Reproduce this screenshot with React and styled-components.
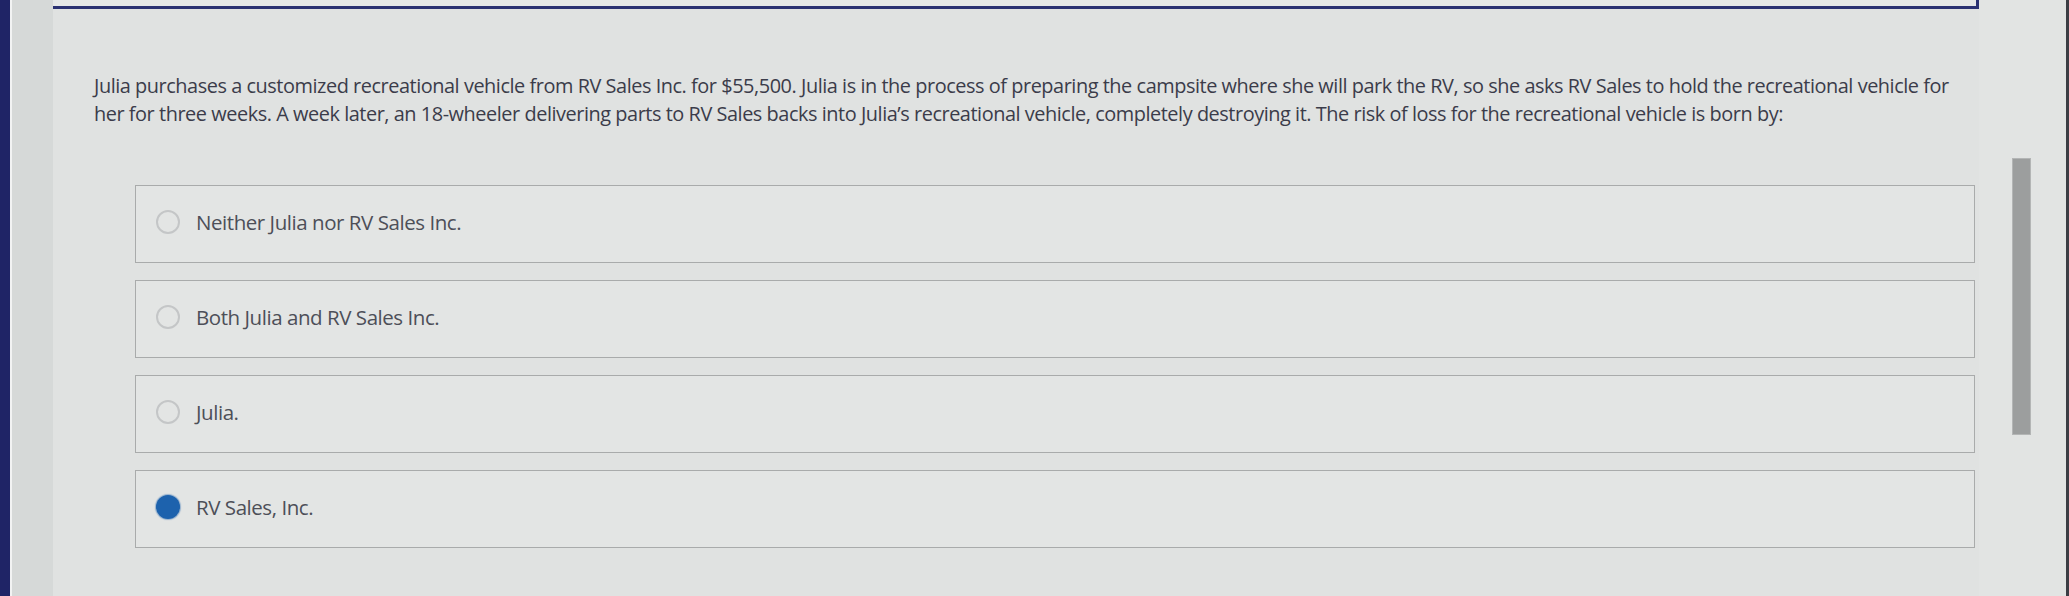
import styled, { createGlobalStyle } from 'styled-components'

const GlobalStyle = createGlobalStyle`
  html, body {
    margin: 0;
    padding: 0;
    background: #dfe1e0;
  }
`

const Screen = styled.div`
  display: flex;
  width: 2069px;
  height: 596px;
  overflow: hidden;
  font-family: 'Open Sans', 'Liberation Sans', sans-serif;
`

const NavRail = styled.div`
  width: 10px;
  background: #1f2466;
  border-right: 2px solid #f2f3f3;
`

const SideBand = styled.div`
  width: 41px;
  background: #d6d9d8;
`

const Main = styled.div`
  flex: 1;
  display: flex;
  background: #e0e2e1;
`

const Content = styled.div`
  width: 1926px;
  display: flex;
  flex-direction: column;
`

const TopPanel = styled.div`
  height: 6px;
  border-bottom: 3px solid #2b3272;
  border-right: 3px solid #2b3272;
  background: #e6e8e7;
`

const Question = styled.p`
  margin: 63px 10px 0 41px;
  font-size: 19.9px;
  line-height: 28px;
  letter-spacing: -0.45px;
  color: #3b3c4a;
`

const Options = styled.div`
  display: flex;
  flex-direction: column;
  gap: 17px;
  margin: 57px 0 0 82px;
  width: 1840px;
`

const Option = styled.label`
  display: flex;
  align-items: center;
  gap: 16px;
  height: 78px;
  box-sizing: border-box;
  padding: 0 0 4px 20px;
  border: 1.5px solid #a9abab;
  background: #e3e5e4;
  font-size: 20.5px;
  letter-spacing: -0.45px;
  color: #4d4f58;
`

const Radio = styled.span`
  width: 24px;
  height: 24px;
  box-sizing: border-box;
  border-radius: 50%;
  flex-shrink: 0;
  border: ${(p) => (p.checked ? 'none' : '2px solid #c4c6c7')};
  background: ${(p) => (p.checked ? '#1d62ad' : 'transparent')};
  box-shadow: ${(p) => (p.checked ? '0 0 1px 1px rgba(29, 98, 173, 0.4)' : 'none')};
`

const ScrollColumn = styled.div`
  flex: 1;
  display: flex;
  background: #e2e4e3;
  border-right: 3px solid #3b3d44;
`

const ScrollThumb = styled.div`
  width: 17px;
  height: 275px;
  margin: 158px 0 0 33px;
  background: #9c9e9e;
  border: 1px solid #b3b5b5;
`

const answers = [
  { text: 'Neither Julia nor RV Sales Inc.', checked: false },
  { text: 'Both Julia and RV Sales Inc.', checked: false },
  { text: 'Julia.', checked: false },
  { text: 'RV Sales, Inc.', checked: true },
]

export default function App() {
  return (
    <>
      <GlobalStyle />
      <Screen>
        <NavRail />
        <SideBand />
        <Main>
          <Content>
            <TopPanel />
            <Question>
              Julia purchases a customized recreational vehicle from RV Sales Inc. for $55,500. Julia is in the
              process of preparing the campsite where she will park the RV, so she asks RV Sales to hold the
              recreational vehicle for her for three weeks. A week later, an 18-wheeler delivering parts to RV Sales
              backs into Julia’s recreational vehicle, completely destroying it. The risk of loss for the
              recreational vehicle is born by:
            </Question>
            <Options>
              {answers.map((a) => (
                <Option key={a.text}>
                  <Radio checked={a.checked} />
                  {a.text}
                </Option>
              ))}
            </Options>
          </Content>
          <ScrollColumn>
            <ScrollThumb />
          </ScrollColumn>
        </Main>
      </Screen>
    </>
  )
}
